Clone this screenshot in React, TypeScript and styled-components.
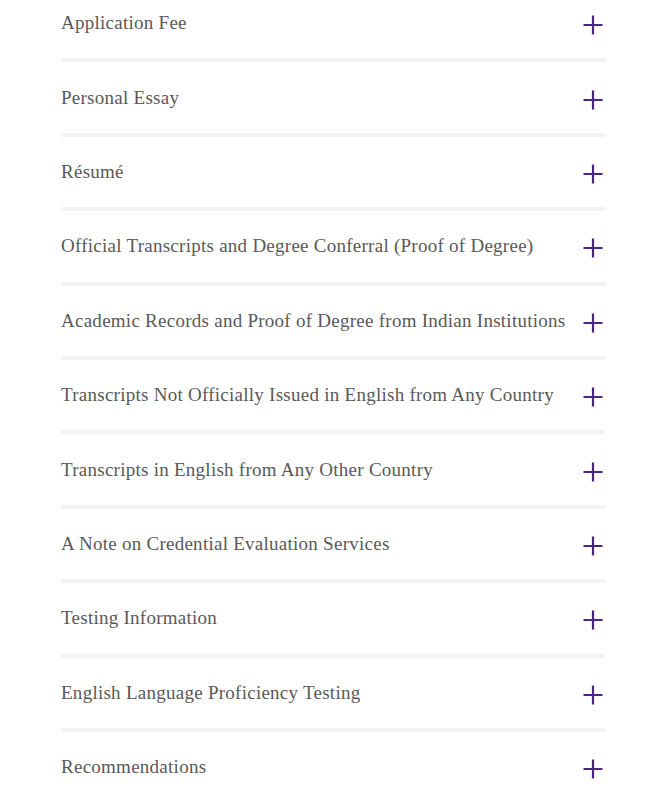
import React from 'react'
import styled, { createGlobalStyle } from 'styled-components'

const GlobalStyle = createGlobalStyle`
    html, body {
        margin: 0;
        padding: 0;
        background: #fff;
    }
`

const Page = styled.div`
    padding: 0 53px 0 61px;
    margin-top: -12px;
    overflow: hidden;
    height: 800px;
`

const List = styled.ul`
    list-style: none;
    margin: 0;
    padding: 0;
    width: 544px;
`

const Item = styled.li`
    border-bottom: 4px solid #f3f3f3;
`

const Header = styled.button`
    display: flex;
    align-items: center;
    justify-content: space-between;
    width: 100%;
    height: 70.4px;
    padding: 0 2px 0 0;
    margin: 0;
    border: 0;
    background: transparent;
    cursor: pointer;
    text-align: left;
`

const Label = styled.span`
    font-family: 'Liberation Serif', serif;
    font-size: 19px;
    color: #595959;
    letter-spacing: 0.26px;
`

const Plus = styled.svg`
    flex: none;
    width: 20px;
    height: 20px;
    margin-top: 4px;
`

const items = [
    'Application Fee',
    'Personal Essay',
    'Résumé',
    'Official Transcripts and Degree Conferral (Proof of Degree)',
    'Academic Records and Proof of Degree from Indian Institutions',
    'Transcripts Not Officially Issued in English from Any Country',
    'Transcripts in English from Any Other Country',
    'A Note on Credential Evaluation Services',
    'Testing Information',
    'English Language Proficiency Testing',
    'Recommendations',
]

const App: React.FC = (): JSX.Element => {
    return (
        <>
            <GlobalStyle />
            <Page>
                <List>
                    {items.map((item) => (
                        <Item key={item}>
                            <Header type="button">
                                <Label>{item}</Label>
                                <Plus viewBox="0 0 20 20">
                                    <path d="M10 0.5V19.5M0.5 10H19.5" stroke="#4b2482" strokeWidth="2.2" fill="none" />
                                </Plus>
                            </Header>
                        </Item>
                    ))}
                </List>
            </Page>
        </>
    )
}

export default App
